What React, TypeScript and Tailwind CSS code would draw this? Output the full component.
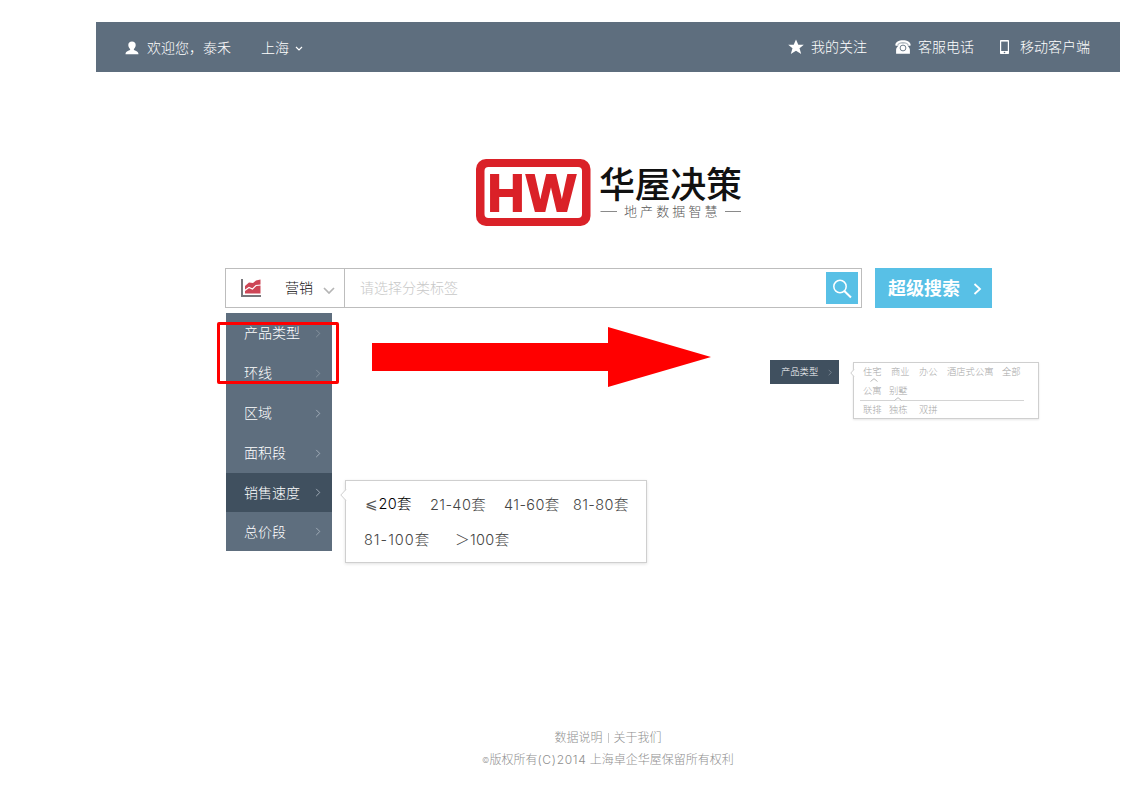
import React from 'react';

const cjk = "font-['Noto_Sans_CJK_SC',sans-serif]";
const mixed = "font-['Inter','Noto_Sans_CJK_SC',sans-serif]";

function Chevron({ className }: { className: string }) {
  return (
    <svg viewBox="0 0 6 10" className={className} fill="none" stroke="currentColor">
      <path d="M1 1l4 4-4 4" />
    </svg>
  );
}

function Header() {
  return (
    <header className="flex h-[50px] w-[1024px] items-center bg-[#5e6e7e] text-[14px] font-light leading-5 text-white">
      <svg viewBox="0 0 14 14" className="ml-[29px] mt-px h-[14px] w-[14px] fill-white">
        <path d="M7 .5C4.700.5 3.300 2 3.300 4c0 1.700.900 3 1.800 3.900v1.200C3.500 10 .8 10.200.5 13.200h13C13.200 10.200 10.500 10 8.900 9.100V7.900c.9-.9 1.800-2.200 1.800-3.900 0-2-1.400-3.500-3.700-3.500z" />
      </svg>
      <span className="ml-2 w-[114px] whitespace-nowrap">欢迎您，泰禾</span>
      <span>上海</span>
      <svg viewBox="0 0 8 6" className="ml-[6px] mt-[3px] h-[6px] w-2" fill="none" stroke="#fff" strokeWidth="1.200">
        <path d="M1 1l3 3 3-3" />
      </svg>
      <div className="ml-auto flex items-center pr-[30px]">
        <svg viewBox="0 0 16 16" className="h-4 w-4 fill-white">
          <path d="M8 .5l2.300 5.200h5.500l-4.300 3.600 1.700 5.600L8 11.700l-5.200 3.200 1.700-5.600L.2 5.700h5.500z" />
        </svg>
        <span className="ml-[7px] pb-[2px]">我的关注</span>
        <svg viewBox="0 0 16 14" className="ml-7 h-[14px] w-4">
          <path d="M.4 5.600C-.1 2.200 3.500.2 8 .2s8.100 2 7.600 5.400c-1.300.6-2.700.5-3.800 0C11.700 4.200 10.400 3.500 8 3.500s-3.700.7-3.800 2.100c-1.100.5-2.500.6-3.800 0z" fill="#fff" />
          <path d="M4.500 3.500h7c.2 2.500 3.400 3.500 3.400 6.500v3.800H1.100V10c0-3 3.200-4 3.400-6.500z" fill="#fff" />
          <path d="M2.300 5.600C3.300 1.700 12.700 1.700 13.700 5.600" fill="none" stroke="#5e6e7e" strokeWidth=".6" />
          <circle cx="8" cy="8" r="2.900" fill="#fff" stroke="#5e6e7e" strokeWidth=".9" />
        </svg>
        <span className="ml-[7px] pb-[2px]">客服电话</span>
        <svg viewBox="0 0 9 14" className="ml-[26px] h-[14px] w-[9px]">
          <rect width="9" height="14" rx=".7" fill="#fff" />
          <rect x="1.200" y="1.600" width="6.600" height="9.400" fill="#5e6e7e" />
          <circle cx="4.500" cy="12.500" r=".8" fill="#5e6e7e" />
        </svg>
        <span className="ml-[11px] pb-[2px]">移动客户端</span>
      </div>
    </header>
  );
}

function Logo() {
  return (
    <svg viewBox="0 0 270 67" className="ml-[380px] mt-[87px] h-[67px] w-[270px] overflow-visible">
      <rect width="114.500" height="67" rx="10" fill="#da2128" />
      <rect x="8.500" y="8" width="97.500" height="51" rx="4" fill="#fff" />
      <text x="11.500" y="52" fontSize="52.500" fontWeight="700" fill="#da2128" stroke="#da2128" strokeWidth="1.800" textLength="37" lengthAdjust="spacingAndGlyphs" fontFamily="Liberation Sans, sans-serif">H</text>
      <text x="50.300" y="52" fontSize="52.500" fontWeight="700" fill="#da2128" stroke="#da2128" strokeWidth="1.800" textLength="49.500" lengthAdjust="spacingAndGlyphs" fontFamily="Liberation Sans, sans-serif">W</text>
      <text x="123" y="38.500" fontSize="36" fontWeight="500" fill="#111" textLength="143" fontFamily="Noto Sans CJK SC, sans-serif">华屋决策</text>
      <text x="148" y="57" fontSize="13" fontWeight="300" fill="#555" letterSpacing="3.100" fontFamily="Noto Sans CJK SC, sans-serif">地产数据智慧</text>
      <path d="M124.500 52.500h16.500M249 52.500h16" stroke="#8a8a8a" />
    </svg>
  );
}

function SearchBar() {
  return (
    <div className="ml-[129px] mt-[42px] flex h-10">
      <div className="flex w-[637px] items-center border border-[#bdbdbd] text-[14px]">
        <svg viewBox="0 0 20 20" className="ml-[15px] h-5 w-5">
          <path d="M1 1v17h19" fill="none" stroke="#77777b" strokeWidth="2" />
          <path d="M4 8l4-3.500 4 .5 3-2.500 4.500-1V15.500H4z" fill="#cd4656" />
          <path d="M3 13l5-3.500 3.500 1.500L15 7.500l5-.5" fill="none" stroke="#fff" strokeWidth="1.100" />
        </svg>
        <span className="ml-6 pb-[2px] font-light text-[#111]">营销</span>
        <svg viewBox="0 0 12 7" className="ml-[10px] mt-1 h-[7px] w-3" fill="none" stroke="#b5b5b5" strokeWidth="1.700">
          <path d="M1 1l5 5 5-5" />
        </svg>
        <div className="ml-[9px] h-full w-px bg-[#bdbdbd]" />
        <span className="ml-[15px] pb-[2px] font-light text-[#c8c8c8]">请选择分类标签</span>
        <button className="ml-auto mr-[3px] flex h-8 w-8 items-center justify-center bg-[#58c0e6]" aria-label="搜索">
          <svg viewBox="0 0 20 20" className="mt-px h-5 w-5" fill="none" stroke="#fff" strokeWidth="1.500">
            <circle cx="8" cy="7.500" r="6.200" />
            <path d="M12.300 12l6.700 6.500" strokeWidth="2" />
          </svg>
        </button>
      </div>
      <button className="ml-[13px] flex w-[117px] items-center bg-[#58c0e6] text-[18px] font-bold leading-6 text-white">
        <span className="ml-[13px] pb-[2px]">超级搜索</span>
        <svg viewBox="0 0 9 12" className="ml-[13px] mt-px h-3 w-[9px]" fill="none" stroke="#fff" strokeWidth="1.800">
          <path d="M1.500 1L7 6l-5.500 5" />
        </svg>
      </button>
    </div>
  );
}

const categories = ['产品类型', '环线', '区域', '面积段', '销售速度', '总价段'];

function CategoryMenu() {
  return (
    <nav className="flex h-[238px] w-[106px] flex-col bg-[#5e6e7e] text-[14px] leading-5 text-white">
      {categories.map((name, i) => (
        <div
          key={name}
          className={`flex items-center justify-between pl-[18px] pr-[11px] ${i < 4 ? 'h-10' : 'h-[39px]'} ${i === 4 ? 'bg-[#40505f]' : ''}`}
        >
          <span className="pb-[2px] font-light">{name}</span>
          <Chevron className={`h-[9px] w-[6px] ${i < 2 ? 'text-[#8996a2]' : 'text-[#a9b4be]'}`} />
        </div>
      ))}
    </nav>
  );
}

function SpeedPanel() {
  return (
    <div className={`relative ml-[13px] mt-[167px] h-[83px] w-[302px] border border-[#cfcfcf] bg-white pl-[18px] pt-[6px] text-[14.500px] font-light tracking-[0.4px] text-[#444] shadow-[0_1px_3px_rgba(0,0,0,0.12)] ${mixed}`}>
      <svg viewBox="0 0 7 12" className="absolute -left-[6px] top-2 h-3 w-[7px]">
        <path d="M6 .5L.8 6 6 11.500h1V.5z" fill="#fff" />
        <path d="M6 .5L.8 6 6 11.500" fill="none" stroke="#cfcfcf" />
      </svg>
      <div className="flex h-[35px] items-center whitespace-nowrap">
        <span className="w-[66px] text-black"><span className="ml-px text-[#555] font-['DejaVu_Sans',sans-serif]">⩽</span>20套</span>
        <span className="w-[74px]">21-40套</span>
        <span className="w-[69px]">41-60套</span>
        <span>81-80套</span>
      </div>
      <div className="flex h-[35px] items-center whitespace-nowrap">
        <span className="w-[91px] tracking-[1px]">81-100套</span>
        <span>＞100套</span>
      </div>
    </div>
  );
}

function TypePreview() {
  return (
    <>
      <div className="ml-[123px] mt-[47px] flex h-6 w-[69px] items-center bg-[#40505f] pl-[11px] text-[9.300px] font-light leading-3 text-white">
        <span className="whitespace-nowrap pb-[2px]">产品类型</span>
        <Chevron className="ml-[10px] h-[7px] w-1 text-[#8f9ba6]" />
      </div>
      <div className="relative ml-[14px] mt-[49px] h-[57px] w-[186px] border border-[#cfcfcf] bg-white pl-[9px] text-[9.300px] font-light leading-3 text-[#a6a6a6] shadow-[0_1px_2px_rgba(0,0,0,0.1)]">
        <svg viewBox="0 0 5 8" className="absolute -left-1 top-[6px] h-2 w-[5px]">
          <path d="M4 .5L.8 4 4 7.500h1v-7z" fill="#fff" />
          <path d="M4 .5L.8 4 4 7.500" fill="none" stroke="#cfcfcf" />
        </svg>
        <div className="flex h-[19px] items-center whitespace-nowrap pb-[3px]">
          <span className="w-7">住宅</span>
          <span className="w-7">商业</span>
          <span className="w-7">办公</span>
          <span className="w-[55px]">酒店式公寓</span>
          <span>全部</span>
        </div>
        <div className="-ml-[3px] flex h-[19px] w-[164px] items-center border-b border-[#d4d4d4] pb-[2px] pl-[3px]">
          <span className="w-[26px]">公寓</span>
          <span>别墅</span>
        </div>
        <div className="flex h-[15px] items-center">
          <span className="w-[26px]">联排</span>
          <span className="w-[30px]">独栋</span>
          <span>双拼</span>
        </div>
        <svg viewBox="0 0 8 4" className="absolute left-4 top-[15px] h-1 w-2">
          <path d="M.5 3.500L4 .7l3.500 2.800" fill="#fff" stroke="#bbb" />
        </svg>
        <svg viewBox="0 0 8 4" className="absolute left-10 top-[34px] h-1 w-2">
          <path d="M.5 3.500L4 .7l3.500 2.800" fill="#fff" stroke="#bbb" />
        </svg>
      </div>
    </>
  );
}

export default function App() {
  return (
    <div className={`relative h-[808px] w-[1138px] overflow-hidden bg-white pl-24 pt-[22px] ${cjk}`}>
      <Header />
      <Logo />
      <SearchBar />
      <main className="ml-[130px] mt-[5px] flex h-[238px] items-start">
        <CategoryMenu />
        <SpeedPanel />
        <TypePreview />
      </main>
      <footer className={`mt-[176px] w-[1024px] text-center text-[12px] font-light leading-[22px] text-[#8f8f8f] ${mixed}`}>
        <div className="flex items-center justify-center">
          <span>数据说明</span>
          <i className="mx-[5px] h-[10px] w-px bg-[#c8c8c8]" />
          <span>关于我们</span>
        </div>
        <p>
          <span className="align-[1px] text-[8px]">©</span>版权所有<span className="tracking-[0.7px]">(C)2014</span> 上海卓企华屋保留所有权利
        </p>
      </footer>
      <div className="absolute left-[217px] top-[322px] h-[62px] w-[122px] rounded-[2px] border-[3px] border-[#f00]" />
      <svg viewBox="0 0 339 60" className="absolute left-[372px] top-[327px] h-[60px] w-[339px]">
        <path d="M0 16h236V0l103 30-103 30V44H0z" fill="#f00" />
      </svg>
    </div>
  );
}
